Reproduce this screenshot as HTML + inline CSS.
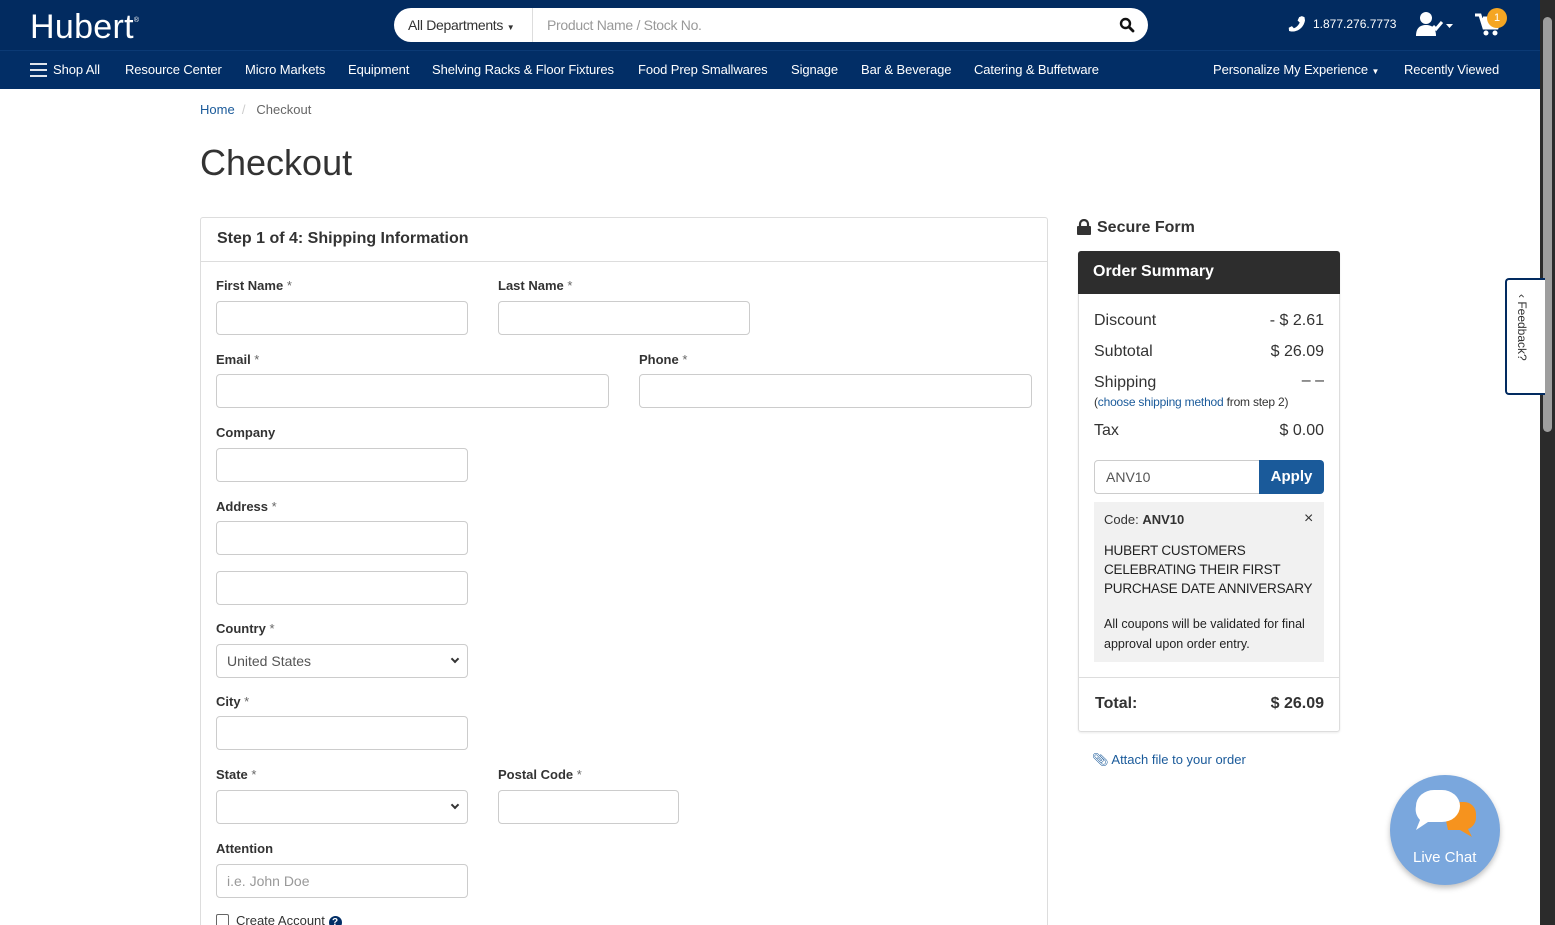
<!DOCTYPE html>
<html><head><meta charset="utf-8"><style>
*{box-sizing:border-box;margin:0;padding:0}
html,body{width:1555px;height:925px;overflow:hidden}
body{background:#fff;font-family:"Liberation Sans",Arial,sans-serif;color:#333;position:relative}
.a{position:absolute}
.hdr{left:0;top:0;width:1540px;height:50px;background:#022b60}
.nav{left:0;top:50px;width:1540px;height:39px;background:#022e66;border-top:1px solid #0b3a75}
.nav span{position:absolute;top:11px;color:#fff;font-size:13px;white-space:nowrap;letter-spacing:-0.1px}
.lbl{font-size:13px;font-weight:bold;color:#333}
.lbl i{font-style:normal;font-weight:normal;color:#666}
.in{border:1px solid #ccc;border-radius:4px;height:34px;background:#fff}
.sel{font-size:14px;color:#555;padding:8px 10px}
.chev{position:absolute;right:9px;top:11px;width:6px;height:6px;border-right:2px solid #333;border-bottom:2px solid #333;transform:rotate(45deg)}
.row{font-size:16px;color:#333}
</style></head><body>
<div class="a hdr"></div>
<div class="a" style="left:30px;top:8px;color:#fff;font-size:34px;letter-spacing:0.3px">Hubert<sup style="font-size:7px;vertical-align:top;position:relative;top:9px">®</sup></div>
<div class="a" style="left:394px;top:8px;width:754px;height:34px;background:#fff;border-radius:17px"></div>
<div class="a" style="left:408px;top:17px;font-size:14px;color:#333;letter-spacing:-0.3px">All Departments <span style="font-size:8px">▼</span></div>
<div class="a" style="left:532px;top:8px;width:1px;height:34px;background:#ddd"></div>
<div class="a" style="left:547px;top:17px;font-size:14px;color:#999;letter-spacing:-0.3px">Product Name / Stock No.</div>
<svg class="a" style="left:1119px;top:17px" width="16" height="16" viewBox="0 0 16 16"><circle cx="6.5" cy="6.5" r="4.5" stroke="#111" stroke-width="2.4" fill="none"/><path d="M10 10l4 4" stroke="#111" stroke-width="2.8" stroke-linecap="round"/></svg>
<svg class="a" style="left:1288px;top:15px" width="17" height="17" viewBox="0 0 16 16"><path d="M13 1l2.5 1 .5 3C15 11 10 16 3 15.5L1 15l-.3-3 3-1.5 1.8 2c2.5-1 4.5-3 5.5-5.5l-2-1.8L10.5 2z" fill="#fff"/></svg>
<div class="a" style="left:1313px;top:17px;font-size:12px;color:#fff">1.877.276.7773</div>
<svg class="a" style="left:1416px;top:11px" width="40" height="26" viewBox="0 0 40 26"><circle cx="10" cy="7" r="6" fill="#fff"/><path d="M0 25c0-8 4-11 10-11s10 3 10 11z" fill="#fff"/><path d="M17 15l3 3 6-7" stroke="#fff" stroke-width="3" fill="none"/><path d="M30 13h7l-3.5 4z" fill="#fff"/></svg>
<svg class="a" style="left:1475px;top:13px" width="28" height="24" viewBox="0 0 28 24"><path d="M0 2h5l4 13h13l3-10H8" stroke="#fff" stroke-width="3" fill="#fff"/><circle cx="11" cy="20" r="2.5" fill="#fff"/><circle cx="20" cy="20" r="2.5" fill="#fff"/></svg>
<div class="a" style="left:1487px;top:8px;width:20px;height:20px;border-radius:50%;background:#f5a623;color:#fff;font-size:11px;text-align:center;line-height:20px">1</div>
<div class="a nav">
<svg style="position:absolute;left:30px;top:12px" width="17" height="14"><path d="M0 1h17M0 7h17M0 13h17" stroke="#fff" stroke-width="1.8"/></svg>
<span style="left:53px">Shop All</span><span style="left:125px">Resource Center</span><span style="left:245px">Micro Markets</span><span style="left:348px">Equipment</span><span style="left:432px">Shelving Racks &amp; Floor Fixtures</span><span style="left:638px">Food Prep Smallwares</span><span style="left:791px">Signage</span><span style="left:861px">Bar &amp; Beverage</span><span style="left:974px">Catering &amp; Buffetware</span><span style="left:1213px">Personalize My Experience <small style="font-size:8px">▼</small></span><span style="left:1404px">Recently Viewed</span>
</div>
<div class="a" style="left:1540px;top:0;width:15px;height:925px;background:#2b2b2b"></div>
<div class="a" style="left:1543px;top:17px;width:9px;height:415px;background:#9e9e9e;border-radius:5px"></div>

<div class="a" style="left:200px;top:102px;font-size:13px;color:#666"><span style="color:#1a5a9a">Home</span>&nbsp;&nbsp;<span style="color:#ccc">/</span>&nbsp;&nbsp; Checkout</div>
<div class="a" style="left:200px;top:142px;font-size:36px;color:#333">Checkout</div>

<div class="a" style="left:200px;top:217px;width:848px;height:720px;border:1px solid #ddd;border-radius:3px"></div>
<div class="a" style="left:201px;top:261px;width:846px;height:1px;background:#ddd"></div>
<div class="a" style="left:217px;top:230px;font-size:16px;font-weight:bold;color:#333">Step 1 of 4: Shipping Information</div>

<div class="a lbl" style="left:216px;top:278px">First Name <i>*</i></div>
<div class="a in" style="left:216px;top:301px;width:252px"></div>
<div class="a lbl" style="left:498px;top:278px">Last Name <i>*</i></div>
<div class="a in" style="left:498px;top:301px;width:252px"></div>
<div class="a lbl" style="left:216px;top:352px">Email <i>*</i></div>
<div class="a in" style="left:216px;top:374px;width:393px"></div>
<div class="a lbl" style="left:639px;top:352px">Phone <i>*</i></div>
<div class="a in" style="left:639px;top:374px;width:393px"></div>
<div class="a lbl" style="left:216px;top:425px">Company</div>
<div class="a in" style="left:216px;top:448px;width:252px"></div>
<div class="a lbl" style="left:216px;top:499px">Address <i>*</i></div>
<div class="a in" style="left:216px;top:521px;width:252px"></div>
<div class="a in" style="left:216px;top:571px;width:252px"></div>
<div class="a lbl" style="left:216px;top:621px">Country <i>*</i></div>
<div class="a in sel" style="left:216px;top:644px;width:252px">United States<span class="chev"></span></div>
<div class="a lbl" style="left:216px;top:694px">City <i>*</i></div>
<div class="a in" style="left:216px;top:716px;width:252px"></div>
<div class="a lbl" style="left:216px;top:767px">State <i>*</i></div>
<div class="a in sel" style="left:216px;top:790px;width:252px"><span class="chev"></span></div>
<div class="a lbl" style="left:498px;top:767px">Postal Code <i>*</i></div>
<div class="a in" style="left:498px;top:790px;width:181px"></div>
<div class="a lbl" style="left:216px;top:841px">Attention</div>
<div class="a in sel" style="left:216px;top:864px;width:252px;color:#999">i.e. John Doe</div>
<div class="a" style="left:216px;top:914px;width:13px;height:13px;border:1px solid #666;border-radius:2px"></div>
<div class="a" style="left:236px;top:913px;font-size:13px;color:#333">Create Account <span style="display:inline-block;width:13px;height:13px;border-radius:50%;background:#022e66;color:#fff;font-size:10px;text-align:center;line-height:13px;font-weight:bold">?</span></div>

<svg class="a" style="left:1077px;top:219px" width="14" height="16" viewBox="0 0 14 16"><path d="M3 7V5a4 4 0 018 0v2" stroke="#333" stroke-width="2.2" fill="none"/><rect x="0" y="7" width="14" height="9" rx="1" fill="#333"/></svg>
<div class="a" style="left:1097px;top:219px;font-size:16px;font-weight:bold;color:#333">Secure Form</div>
<div class="a" style="left:1078px;top:251px;width:262px;height:481px;border:1px solid #ddd;border-radius:3px;box-shadow:0 1px 2px rgba(0,0,0,.08)"></div>
<div class="a" style="left:1078px;top:251px;width:262px;height:43px;background:#2d2d2d;border-radius:3px 3px 0 0"></div>
<div class="a" style="left:1093px;top:263px;font-size:16px;font-weight:bold;color:#fff">Order Summary</div>
<div class="a row" style="left:1094px;top:312px">Discount</div><div class="a row" style="right:231px;top:312px">- $ 2.61</div>
<div class="a row" style="left:1094px;top:343px">Subtotal</div><div class="a row" style="right:231px;top:343px">$ 26.09</div>
<div class="a row" style="left:1094px;top:374px">Shipping</div><div class="a row" style="right:231px;top:372px">– –</div>
<div class="a" style="left:1094px;top:395px;font-size:12px;color:#333;letter-spacing:-0.2px">(<span style="color:#1a5a9a">choose shipping method</span> from step 2)</div>
<div class="a row" style="left:1094px;top:422px">Tax</div><div class="a row" style="right:231px;top:422px">$ 0.00</div>
<div class="a" style="left:1094px;top:460px;width:166px;height:34px;border:1px solid #ccc;border-radius:4px 0 0 4px;font-size:14px;color:#555;padding:8px 11px">ANV10</div>
<div class="a" style="left:1259px;top:460px;width:65px;height:34px;background:#1a5a9a;border-radius:0 4px 4px 0;color:#fff;font-size:15px;font-weight:bold;text-align:center;line-height:34px">Apply</div>
<div class="a" style="left:1094px;top:502px;width:230px;height:160px;background:#f1f1f1"></div>
<div class="a" style="left:1104px;top:512px;font-size:13px;color:#333">Code: <b>ANV10</b></div>
<div class="a" style="left:1304px;top:510px;font-size:16px;color:#333">×</div>
<div class="a" style="left:1104px;top:541px;font-size:13.5px;line-height:19px;color:#222;letter-spacing:-0.2px">HUBERT CUSTOMERS<br>CELEBRATING THEIR FIRST<br>PURCHASE DATE ANNIVERSARY</div>
<div class="a" style="left:1104px;top:614px;font-size:12.5px;line-height:20px;color:#222">All coupons will be validated for final<br>approval upon order entry.</div>
<div class="a" style="left:1079px;top:677px;width:260px;height:1px;background:#ddd"></div>
<div class="a" style="left:1095px;top:695px;font-size:16px;font-weight:bold;color:#333">Total:</div>
<div class="a" style="right:231px;top:695px;font-size:16px;font-weight:bold;color:#333">$ 26.09</div>
<div class="a" style="left:1092px;top:752px;font-size:13px;color:#1a5a9a">&#128206;&#xFE0E; Attach file to your order</div>

<div class="a" style="left:1505px;top:278px;width:40px;height:117px;border:2px solid #022b60;border-right:none;border-radius:4px 0 0 4px;background:#fff"></div>
<div class="a" style="left:1515px;top:294px;font-size:12px;color:#333;writing-mode:vertical-rl">‹ Feedback?</div>

<div class="a" style="left:1390px;top:775px;width:110px;height:110px;border-radius:50%;background:#7aa7dd;box-shadow:0 3px 6px rgba(0,0,0,.25)"></div>
<svg class="a" style="left:1412px;top:788px" width="66" height="50" viewBox="0 0 66 50"><path d="M30 14h22a12 12 0 0112 12v4a12 12 0 01-8 11l4 8-12-7H36z" fill="#f6931e"/><path d="M4 18a18 16 0 0118-16h8a18 16 0 0118 16a18 16 0 01-18 16H16l-12 8 4-10A16 16 0 014 18z" fill="#fff"/></svg>
<div class="a" style="left:1413px;top:849px;font-size:15px;color:#fff">Live Chat</div>
</body></html>
